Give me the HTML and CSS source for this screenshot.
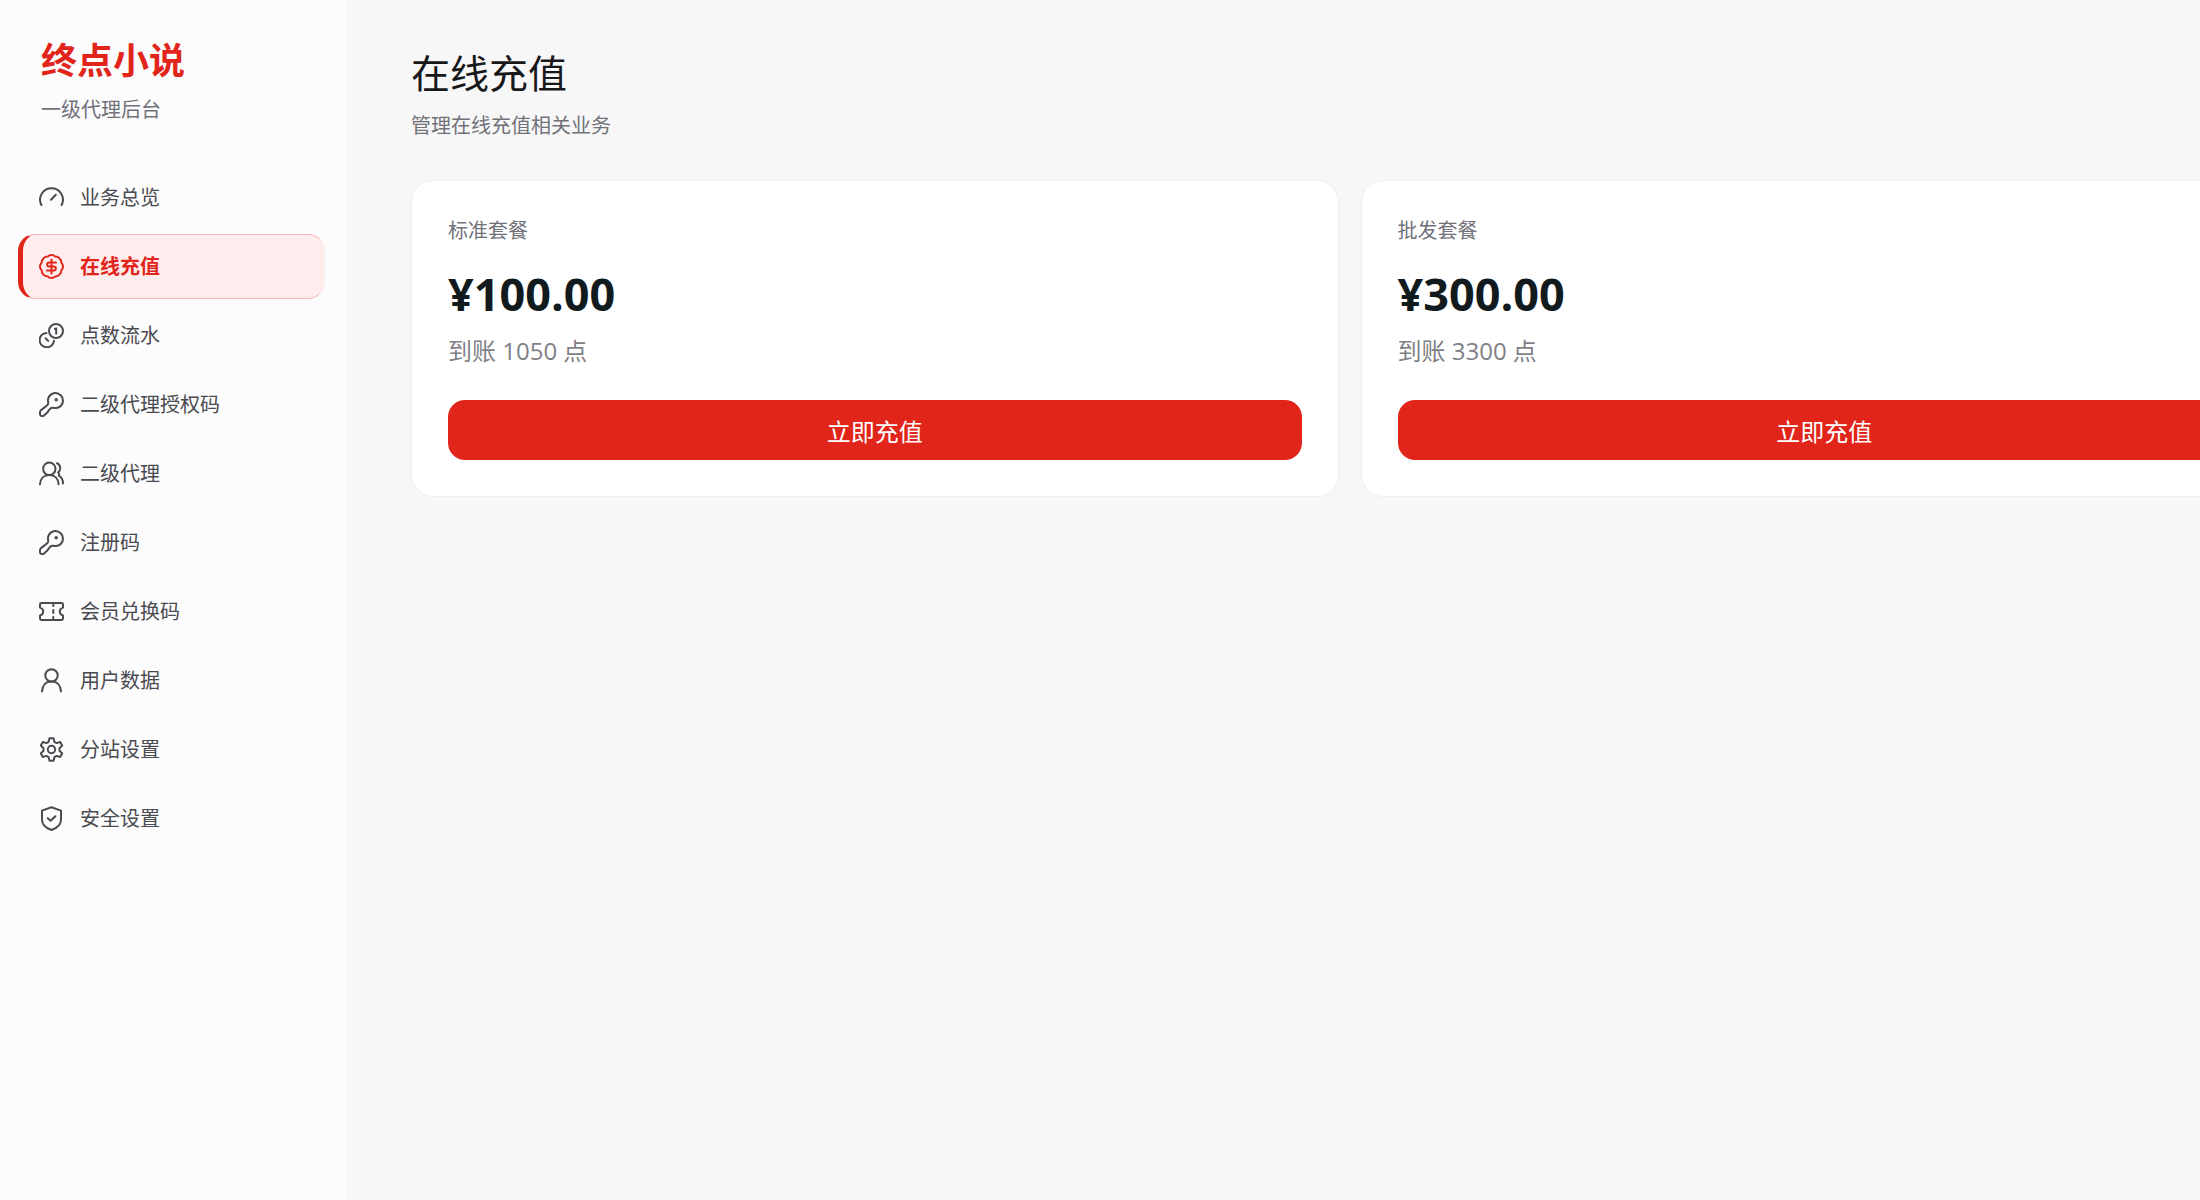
FILE: index.html
```
<!DOCTYPE html>
<html lang="zh-CN">
<head>
    <meta charset="UTF-8">
    <meta name="viewport" content="width=device-width, initial-scale=1.0">
    <title>在线充值</title>
    <link rel="stylesheet" href="styles.css">
</head>
<body>
    <div class="layout">
        <aside class="sidebar">
            <div class="brand">
                <div class="brand-name">终点小说</div>
                <div class="brand-role">一级代理后台</div>
            </div>
            <nav class="menu">
                <a href="#overview">
                    <svg viewBox="0 0 25 25"><path d="M2.4 20A11.4 11.4 0 1 1 22.6 20M12 14.8L16.8 9.8"/></svg>
                    <span>业务总览</span>
                </a>
                <a class="active" href="#recharge">
                    <svg viewBox="0 0 25 25"><path d="M12.5 1Q14.9 1 16.3 2.6Q18.9 2.6 20.6 4.4Q22.4 6.1 22.4 8.7Q24 10.1 24 12.5Q24 14.9 22.4 16.3Q22.4 18.9 20.6 20.6Q18.9 22.4 16.3 22.4Q14.9 24 12.5 24Q10.1 24 8.7 22.4Q6.1 22.4 4.4 20.6Q2.6 18.9 2.6 16.3Q1 14.9 1 12.5Q1 10.1 2.6 8.7Q2.6 6.1 4.4 4.4Q6.1 2.6 8.7 2.6Q10.1 1 12.5 1Z"/><path d="M17 8.4H10.2A2 2 0 0 0 10.2 12.5H14.8A2 2 0 0 1 14.8 16.6H8M12.5 5.6V19.4"/></svg>
                    <span>在线充值</span>
                </a>
                <a href="#points">
                    <svg viewBox="0 0 25 25"><circle cx="17" cy="8" r="7"/><path d="M16 6L17.2 5.4V10.8M7.4 9.9A7.2 7.2 0 1 0 15 17.7M6.6 15.2L9.2 17.9"/></svg>
                    <span>点数流水</span>
                </a>
                <a href="#agent-codes">
                    <svg viewBox="0 0 25 25"><path d="M9.3 10.8A7.5 7.5 0 1 1 14.2 15.7Q12.4 15.5 11.2 16.8L9.6 18.6L8.6 20.3L5 23.6Q3.8 24.4 2.4 24Q1 23.6 1 22.2V20.2Q1 19.2 1.8 18.4L8.2 13.2Q9.3 12.2 9.3 10.8Z"/><circle class="dot" cx="17.2" cy="7.8" r="1.7"/></svg>
                    <span>二级代理授权码</span>
                </a>
                <a href="#agents">
                    <svg viewBox="0 0 25 25"><circle cx="10.3" cy="7.8" r="6.2"/><path d="M1 23.3C1.3 17.6 5 14 10.3 14S19.3 17.6 19.6 23.3M18 2.2C21.8 3.6 22.2 9 19.2 11.6Q20.8 13.4 19.8 14.6C22.6 16 24 18.8 24 22.6"/></svg>
                    <span>二级代理</span>
                </a>
                <a href="#register-codes">
                    <svg viewBox="0 0 25 25"><path d="M9.3 10.8A7.5 7.5 0 1 1 14.2 15.7Q12.4 15.5 11.2 16.8L9.6 18.6L8.6 20.3L5 23.6Q3.8 24.4 2.4 24Q1 23.6 1 22.2V20.2Q1 19.2 1.8 18.4L8.2 13.2Q9.3 12.2 9.3 10.8Z"/><circle class="dot" cx="17.2" cy="7.8" r="1.7"/></svg>
                    <span>注册码</span>
                </a>
                <a href="#redeem-codes">
                    <svg viewBox="0 0 25 25"><path d="M2.4 4H22.6Q24 4 24 5.4V8.6Q20.8 9.4 20.8 12.5T24 16.4V19.6Q24 21 22.6 21H2.4Q1 21 1 19.6V16.4Q4.2 15.6 4.2 12.5T1 8.6V5.4Q1 4 2.4 4ZM14.3 4V7M14.3 11V14M14.3 18V21"/></svg>
                    <span>会员兑换码</span>
                </a>
                <a href="#users">
                    <svg viewBox="0 0 25 25"><circle cx="12.5" cy="7.4" r="6.2"/><path d="M3 23.4C3.3 17.2 7 13.6 12.5 13.6S21.7 17.2 22 23.4"/></svg>
                    <span>用户数据</span>
                </a>
                <a href="#site">
                    <svg viewBox="0 0 25 25"><path d="M10.5 1.2H14.5L15.4 4.8L17.6 6.1L21.2 5L23.2 8.5L20.5 11.2V13.8L23.2 16.5L21.2 20L17.6 18.9L15.4 20.2L14.5 23.8H10.5L9.6 20.2L7.4 18.9L3.8 20L1.8 16.5L4.5 13.8V11.2L1.8 8.5L3.8 5L7.4 6.1L9.6 4.8Z"/><circle cx="12.5" cy="12.5" r="3.7"/></svg>
                    <span>分站设置</span>
                </a>
                <a href="#security">
                    <svg viewBox="0 0 25 25"><path d="M12.5 1.2L22 4.6V13.5C22 18.5 18 22.2 12.5 24C7 22.2 3 18.5 3 13.5V4.6ZM8.8 12.2L11.6 14.8L16.4 10.2"/></svg>
                    <span>安全设置</span>
                </a>
            </nav>
        </aside>
        <main class="main">
            <header class="page-head">
                <h1>在线充值</h1>
                <p>管理在线充值相关业务</p>
            </header>
            <div class="plans">
                <section class="plan">
                    <h2>标准套餐</h2>
                    <div class="price">¥100.00</div>
                    <p>到账 1050 点</p>
                    <button type="button">立即充值</button>
                </section>
                <section class="plan">
                    <h2>批发套餐</h2>
                    <div class="price">¥300.00</div>
                    <p>到账 3300 点</p>
                    <button type="button">立即充值</button>
                </section>
            </div>
        </main>
    </div>
</body>
</html>
```

FILE: styles.css
```
* {
    box-sizing: border-box;
}
body {
    margin: 0;
    background: #f7f7f7;
    color: #18181b;
    font-family: "Open Sans", "Noto Sans CJK SC", sans-serif;
    font-size: 20px;
    line-height: 28px;
}
h1, h2, p {
    margin: 0;
    font-weight: 400;
}
.layout {
    display: flex;
    min-height: 100vh;
}
.sidebar {
    flex: none;
    width: 348px;
    padding: 36px 22px 36px 18px;
    background: #fcfcfc;
    border-right: 1px solid #f2f2f2;
}
.brand {
    padding: 0 23px;
    margin-bottom: 41px;
}
.brand-name {
    color: #e1251b;
    font-size: 36px;
    font-weight: 700;
    line-height: 50px;
}
.brand-role {
    margin-top: 10px;
    color: #71717a;
}
.menu {
    display: flex;
    flex-direction: column;
    gap: 4px;
}
.menu a {
    display: flex;
    align-items: center;
    gap: 16px;
    height: 65px;
    padding: 0 16px;
    border: 1px solid transparent;
    border-left-width: 5px;
    border-radius: 17px;
    color: #4a4a51;
    text-decoration: none;
}
.menu .active {
    background: #ffeded;
    border-color: #f9b9b8 #ffeded #f9b9b8 #e1251b;
    color: #e1251b;
    font-weight: 700;
}
.menu svg {
    flex: none;
    width: 25px;
    height: 25px;
    fill: none;
    stroke: currentColor;
    stroke-width: 2;
    stroke-linecap: round;
    stroke-linejoin: round;
}
.menu .dot {
    fill: currentColor;
    stroke: none;
}
.main {
    flex: 1;
    min-width: 0;
    padding: 46px 0 46px 63px;
    overflow: hidden;
}
.page-head {
    margin-bottom: 40px;
}
.page-head h1 {
    font-size: 39px;
    line-height: 54px;
}
.page-head p {
    margin-top: 12px;
    color: #71717a;
}
/* the second card runs past the right edge */
.plans {
    display: grid;
    grid-template-columns: 1fr 1fr;
    gap: 22px;
    margin-right: -88px;
}
.plan {
    display: flex;
    flex-direction: column;
    padding: 36px;
    background: #fff;
    border: 1px solid #efefef;
    border-radius: 22px;
}
.plan h2 {
    color: #71717a;
    font-size: 20px;
    line-height: 28px;
}
.plan .price {
    margin-top: 19px;
    color: #111a1c;
    font-size: 45px;
    font-weight: 700;
    line-height: 60px;
}
.plan p {
    margin-top: 11px;
    color: #7f7f86;
    font-size: 24px;
    line-height: 32px;
}
.plan button {
    height: 60px;
    margin-top: 33px;
    border: 0;
    border-radius: 17px;
    background: #e1251b;
    color: #fff;
    font-family: inherit;
    font-size: 24px;
}
```
